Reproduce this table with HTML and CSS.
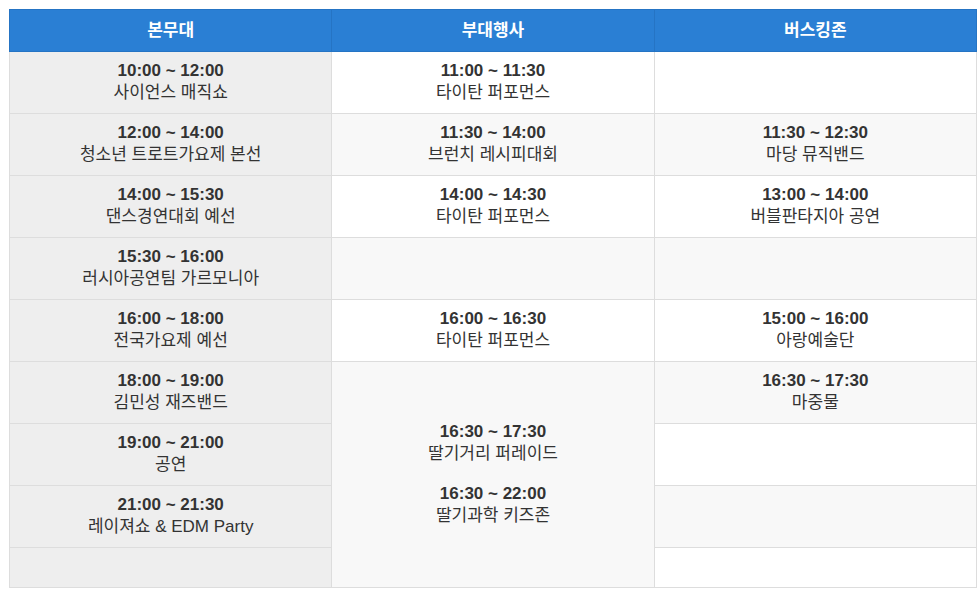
FILE: index.html
```html
<!DOCTYPE html>
<html lang="ko">
<head>
<meta charset="utf-8">
<title>공연 일정</title>
<link rel="stylesheet" href="styles.css">
</head>
<body>
<table class="schedule">
  <colgroup>
    <col class="col"><col class="col"><col class="col">
  </colgroup>
  <thead>
    <tr><th>본무대</th><th>부대행사</th><th>버스킹존</th></tr>
  </thead>
  <tbody>
    <tr>
      <td class="main"><b class="time">10:00 ~ 12:00</b><br>사이언스 매직쇼</td>
      <td><b class="time">11:00 ~ 11:30</b><br>타이탄 퍼포먼스</td>
      <td></td>
    </tr>
    <tr>
      <td class="main"><b class="time">12:00 ~ 14:00</b><br>청소년 트로트가요제 본선</td>
      <td><b class="time">11:30 ~ 14:00</b><br>브런치 레시피대회</td>
      <td><b class="time">11:30 ~ 12:30</b><br>마당 뮤직밴드</td>
    </tr>
    <tr>
      <td class="main"><b class="time">14:00 ~ 15:30</b><br>댄스경연대회 예선</td>
      <td><b class="time">14:00 ~ 14:30</b><br>타이탄 퍼포먼스</td>
      <td><b class="time">13:00 ~ 14:00</b><br>버블판타지아 공연</td>
    </tr>
    <tr>
      <td class="main"><b class="time">15:30 ~ 16:00</b><br>러시아공연팀 가르모니아</td>
      <td></td>
      <td></td>
    </tr>
    <tr>
      <td class="main"><b class="time">16:00 ~ 18:00</b><br>전국가요제 예선</td>
      <td><b class="time">16:00 ~ 16:30</b><br>타이탄 퍼포먼스</td>
      <td><b class="time">15:00 ~ 16:00</b><br>아랑예술단</td>
    </tr>
    <tr>
      <td class="main"><b class="time">18:00 ~ 19:00</b><br>김민성 재즈밴드</td>
      <td rowspan="4" class="merged">
        <div class="event"><b class="time">16:30 ~ 17:30</b><br>딸기거리 퍼레이드</div>
        <div class="event"><b class="time">16:30 ~ 22:00</b><br>딸기과학 키즈존</div>
      </td>
      <td><b class="time">16:30 ~ 17:30</b><br>마중물</td>
    </tr>
    <tr>
      <td class="main"><b class="time">19:00 ~ 21:00</b><br>공연</td>
      <td></td>
    </tr>
    <tr>
      <td class="main"><b class="time">21:00 ~ 21:30</b><br>레이져쇼 &amp; EDM Party</td>
      <td></td>
    </tr>
    <tr class="last">
      <td class="main">&nbsp;</td>
      <td>&nbsp;</td>
    </tr>
  </tbody>
</table>
</body>
</html>
```
FILE: styles.css
```css
html, body {
  margin: 0;
  padding: 0;
  background: #fff;
}
body {
  padding: 9px 0 0 9px;
  font-family: "Liberation Sans", Arial, "Noto Sans CJK KR", sans-serif;
  color: #333;
}
.schedule {
  width: 968px;
  border-collapse: collapse;
  table-layout: fixed;
}
.schedule th {
  background: #2a7fd4;
  color: #fff;
  font-size: 17px;
  font-weight: bold;
  line-height: 22px;
  height: 22px;
  padding: 10px 5px 9px;
  border: 1px solid #2574c4;
  text-align: center;
}
.schedule td {
  font-size: 17px;
  line-height: 22px;
  height: 44px;
  padding: 8px 5px 9px;
  border: 1px solid #ddd;
  text-align: center;
  vertical-align: middle;
  background: #fff;
}
.schedule tbody tr:nth-child(even) td {
  background: #f8f8f8;
}
.schedule td.main,
.schedule tbody tr:nth-child(even) td.main {
  background: #eeeeee;
}
.schedule tr.last td {
  height: 22px;
}
.schedule td.merged {
  background: #f8f8f8;
}
.time {
  font-weight: bold;
}
.event + .event {
  margin-top: 18px;
}
```
